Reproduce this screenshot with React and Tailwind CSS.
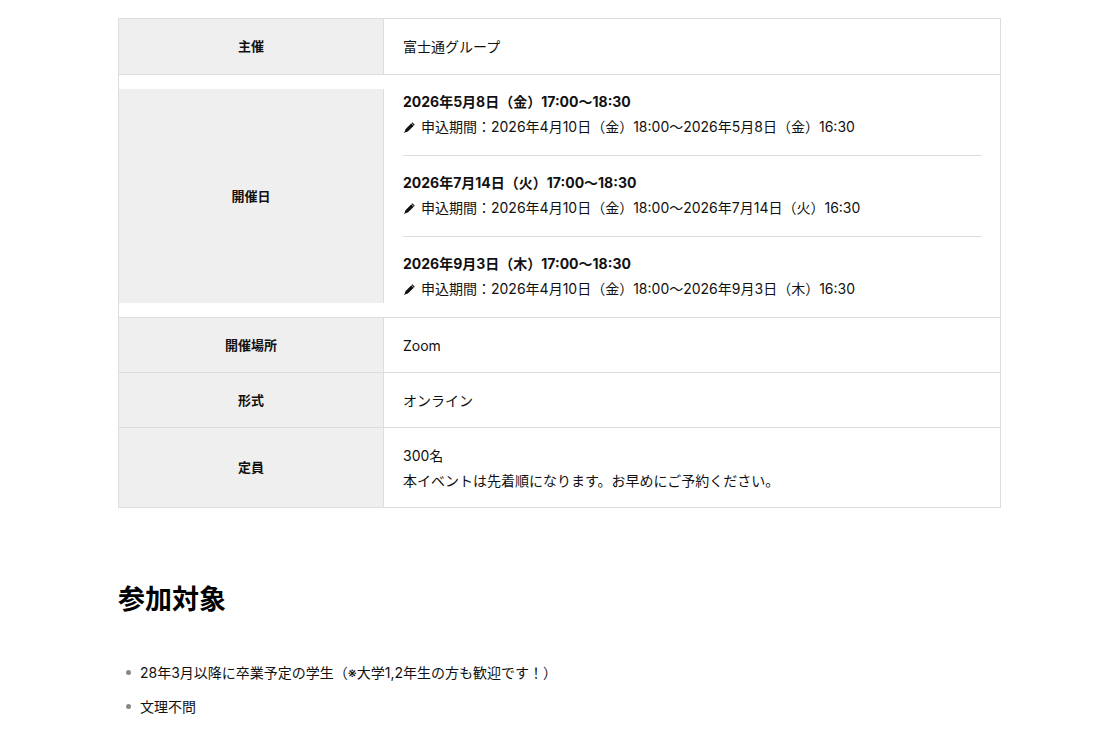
const F = { fontFamily: 'Inter, "Noto Sans CJK JP", sans-serif' };
const Pen = () => (
  <svg width="13" height="13" viewBox="0 0 16 16" className="inline-block mr-[5px] -mt-[2px]">
    <path d="M11.5 1.5l3 3L6 13l-3 .8L1 15l1.2-2L3 10z" fill="#111" />
    <path d="M10.3 2.7l3 3" stroke="#fff" strokeWidth="0.9" />
  </svg>
);
const dates = [
  ['2026年5月8日（金）17:00～18:30', '2026年4月10日（金）18:00～2026年5月8日（金）16:30'],
  ['2026年7月14日（火）17:00～18:30', '2026年4月10日（金）18:00～2026年7月14日（火）16:30'],
  ['2026年9月3日（木）17:00～18:30', '2026年4月10日（金）18:00～2026年9月3日（木）16:30'],
];
function Row({ label, children, cls = 'h-[55px]' }) {
  return (
    <div className={`flex border-t border-[#dddddd] first:border-t-0 ${cls}`}>
      <div className="w-[265px] shrink-0 bg-[#efefef] border-r border-[#dddddd] flex items-center justify-center font-bold text-[13px]">{label}</div>
      <div className="flex-1 pl-[19px] pr-[18px] flex flex-col justify-center">{children}</div>
    </div>
  );
}
export default function App() {
  return (
    <div style={F} className="bg-white text-[#111] text-[14px] leading-[25px] w-[1111px] h-[732px] overflow-hidden">
      <div className="ml-[118px] w-[883px] pt-[18px]">
        <div className="border border-[#dddddd]">
          <Row label="主催">富士通グループ</Row>
          <Row label="開催日" cls="py-[14px]">
            {dates.map((d, i) => (
              <div key={i} className={i < 2 ? 'pb-[16px] border-b border-[#dddddd] mb-[14px]' : 'pb-[2px]'}>
                <div className="font-bold">{d[0]}</div>
                <div><Pen />申込期間：{d[1]}</div>
              </div>
            ))}
          </Row>
          <Row label="開催場所">Zoom</Row>
          <Row label="形式">オンライン</Row>
          <Row label="定員" cls="h-[80px]">
            <div>300名</div>
            <div>本イベントは先着順になります。お早めにご予約ください。</div>
          </Row>
        </div>
        <h2 className="mt-[72px] text-[27px] font-bold leading-[40px] text-black">参加対象</h2>
        <ul className="mt-[40px]">
          {['28年3月以降に卒業予定の学生（※大学1,2年生の方も歓迎です！）', '文理不問'].map((t) => (
            <li key={t} className="flex items-center mb-[9px]">
              <span className="w-[5px] h-[5px] rounded-full bg-[#888] ml-[8px] mr-[9px]" />
              {t}
            </li>
          ))}
        </ul>
      </div>
    </div>
  );
}
